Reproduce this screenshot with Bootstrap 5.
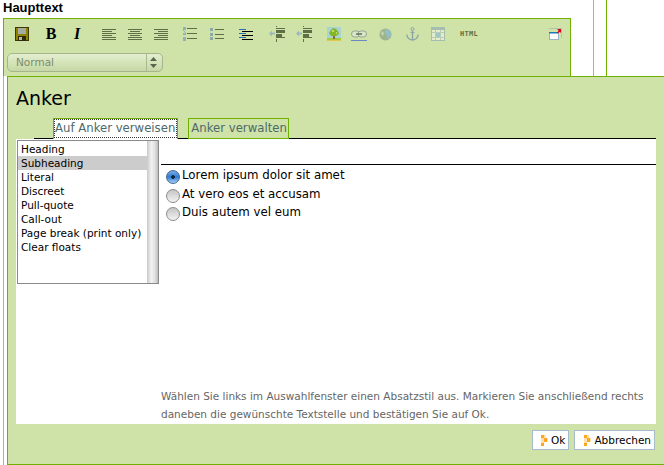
<!DOCTYPE html>
<html lang="de">
<head>
  <meta charset="UTF-8" />
  <meta name="viewport" content="width=device-width, initial-scale=1" />
  <title>Anker</title>
  <link href="https://cdn.jsdelivr.net/npm/bootstrap@5.3.2/dist/css/bootstrap.min.css" rel="stylesheet" />
  <style>
    body {
      background-color: #fff;
      color: #000;
      font-family: "DejaVu Sans", sans-serif;
      font-size: 10.5px;
      overflow: hidden;
    }
    svg { display: block; flex: none; }
    .page-top { height: 76px; }
    .editor-col { width: 571px; padding-left: 3px; }
    .field-label {
      font-family: "Liberation Sans", sans-serif;
      font-weight: 700;
      font-size: 13px;
      line-height: 16px;
      height: 18px;
    }
    .edit-bar {
      height: 58px;
      background: #cfe2a8;
      border: 1px solid #6fb000;
      border-bottom: 0;
      padding: 7px 3px 0 3px;
    }
    .bar-btn { height: 16px; }
    .sp10 { margin-left: 10px; }
    .sp11 { margin-left: 11px; }
    .sp12 { margin-left: 12px; }
    .sp13 { margin-left: 13px; }
    .sp14 { margin-left: 14px; }
    .sp15 { margin-left: 15px; }
    .sp16 { margin-left: 16px; }
    .sp19 { margin-left: 19px; }
    .end-icon { margin-right: 5px; }
    .bold-b, .ital-i {
      font-family: "Liberation Serif", serif;
      font-weight: 700;
      font-size: 16px;
      line-height: 16px;
      width: 12px;
      text-align: center;
    }
    .ital-i { font-style: italic; }
    .html-tag {
      font-family: "DejaVu Sans Mono", monospace;
      font-weight: 700;
      font-size: 7px;
      line-height: 16px;
      color: #5f6f45;
      width: 19px;
      letter-spacing: .3px;
    }
    .style-pick {
      width: 156px;
      height: 19px;
      margin: 11px 0 0 0;
      padding: 0 0 0 8px;
      font-family: "DejaVu Sans", sans-serif;
      font-size: 10.5px;
      line-height: 17px;
      color: #7c8b6c;
      border: 1px solid #a5b68c;
      border-radius: 5px;
      background-color: #d6e5b8;
      background-image:
        url("data:image/svg+xml,%3Csvg xmlns='http://www.w3.org/2000/svg' width='7' height='11'%3E%3Cpath d='M3.5 0 7 4H0zM0 7h7l-3.500 4z' fill='%23596650'/%3E%3C/svg%3E"),
        linear-gradient(#a9ba90, #a9ba90),
        linear-gradient(#e4eed0, #d3e3b6 55%, #c6d8a6);
      background-repeat: no-repeat;
      background-position: 142px 3px, 138px 0, 0 0;
      background-size: 7px 11px, 1px 100%, 100% 100%;
    }
    .style-pick:disabled { color: #7c8b6c; background-color: #d6e5b8; }
    .rule-gray { margin-left: 22px; width: 14px; border-left: 1px solid #9fb2bd; border-right: 1px solid #6fb000; }
    .dlg-outer { padding-left: 3px; height: 389px; }
    .dlg-rail { border-left: 1px solid #9fb2bd; padding-left: 3px; height: 100%; }
    .dlg-box {
      background: #cfe2a8;
      border: 1px solid #6fb000;
      border-right: 0;
      height: 389px;
      padding: 0 8px;
    }
    .dlg-title { font-size: 19px; font-weight: 400; line-height: 24px; margin: 9px 0 8px 0; }
    .tab-strip { margin-left: 18px; padding-left: 19px; border-bottom: 1px solid #000; gap: 10px; height: 21px; }
    .tab-strip .nav-link {
      font-size: 11.7px;
      line-height: 18px;
      height: 21px;
      padding: 0 1px 0 2px;
      color: #4c6a6a;
      border: 1px solid #6fb000;
      border-radius: 0;
      background: #cfe2a8;
    }
    .tab-strip .nav-link.active {
      padding: 0 2px 0 1px;
      background: #fff;
      border-bottom: 0;
      color: #4c6a6a;
      outline: 1px dotted #333;
      outline-offset: -2px;
    }
    .work-pane { background: #fff; width: 640px; height: 285px; }
    .style-box {
      flex: none;
      width: 142px;
      height: 144px;
      margin: 1px 0 0 1px;
      border: 1px solid #8a8a8a;
    }
    .style-box .list-group { width: 129px; margin-top: 1px; }
    .style-box .list-group-item {
      margin: 0;
      padding: 0 0 0 3px;
      border: 0;
      line-height: 14px;
      font-size: 10.5px;
      color: #000;
      background: transparent;
      border-radius: 0;
      white-space: nowrap;
    }
    .style-box .list-group-item.active { background: #ccc; color: #000; margin: 0; }
    .fake-scroll { width: 11px; background: linear-gradient(90deg, #c9c9c9, #f2f2f2 40%, #e2e2e2 70%, #bdbdbd); }
    .text-pane { margin-left: 2px; padding-bottom: 1px; }
    .pane-rule { height: 26px; border-bottom: 1px solid #000; flex: none; }
    .anchor-picks { padding: 2px 0 0 5px; }
    .anchor-picks .form-check {
      min-height: 0;
      height: 18.5px;
      padding-left: 0;
      margin: 0;
      display: flex;
      align-items: center;
      font-size: 11.8px;
    }
    .anchor-picks .form-check-input {
      float: none;
      width: 14px;
      height: 14px;
      margin: 2px 2px 0 0;
      border: 1px solid #8c8c8c;
      background: linear-gradient(#c4c4c4, #f4f4f4);
    }
    .anchor-picks .form-check-input:checked {
      border-color: #47698f;
      background: radial-gradient(circle at 50% 50%, #10233a 0 1.5px, transparent 2.2px), linear-gradient(#76aee8, #2f7ad2 50%, #a4d0f7);
    }
    .anchor-picks .form-check-label { color: #000; }
    .help-note { color: #666; font-size: 10.5px; line-height: 18px; padding-right: 4px; }
    .dlg-foot { gap: 5px; padding: 6px 1px 0 0; }
    .dlg-btn {
      display: flex;
      align-items: center;
      height: 20px;
      padding: 0 3px 0 8px;
      font-size: 10.5px;
      line-height: 18px;
      color: #000;
      background: #fff;
      border: 1px solid #a5bccb;
      border-radius: 0;
    }
    .dlg-btn.wide-btn { padding-left: 9px; }
    .dlg-btn svg { margin-right: 3px; }
  </style>
</head>
<body>
  <svg width="0" height="0" class="position-absolute">
    <symbol id="al" viewBox="0 0 14 11"><path d="M0 .5h14M0 2.500h10M0 4.500h14M0 6.500h10M0 8.500h14M0 10.500h14" stroke="#5f6f45"/></symbol>
    <symbol id="ac" viewBox="0 0 14 11"><path d="M0 .5h14M2 2.500h10M0 4.500h14M2 6.500h10M0 8.500h14M0 10.500h14" stroke="#5f6f45"/></symbol>
    <symbol id="ar" viewBox="0 0 14 11"><path d="M0 .5h14M4 2.500h10M0 4.500h14M4 6.500h10M0 8.500h14M0 10.500h14" stroke="#5f6f45"/></symbol>
    <symbol id="ind" viewBox="0 0 16 16"><path d="M7.500 0v1M7.500 13v3M7 2.500h9M7 11.500h9" stroke="#5f6f45"/><path d="M7 4h9v3H7zM7 8h6v3H7z" fill="#5f6f45"/><path d="M0 7.500l3-3v2h3v2H3v2z" fill="#9db8bd"/></symbol>
    <symbol id="arrow" viewBox="0 0 7 11"><path d="M0 0h3v3H0zM3 3h3v4H3zM0 8h3v3H0z" fill="#ffa51f"/><path d="M3 0h2v3H3zM0 3h3v5H0zM6 3h1v4H6z" fill="#ffe0a8"/></symbol>
  </svg>

  <div class="page-top d-flex">
    <div class="editor-col">
      <div class="field-label">Haupttext</div>
      <div class="edit-bar">
        <div class="bar-btn d-flex align-items-center">
          <svg class="ms-2" width="14" height="14" viewBox="0 0 14 14"><path d="M0 0h14v14H0z" fill="#3f3a00"/><path d="M1 1h12v12H1z" fill="#8c8100"/><path d="M3 1h8v6H3z" fill="#a6aca0"/><path d="M3 9h8v5H3z" fill="#2e2c10"/><path d="M4 10h3v3H4z" fill="#b8b8a0"/></svg>
          <span class="bold-b sp16">B</span>
          <span class="ital-i sp14">I</span>
          <svg class="sp19" width="14" height="11"><use href="#al"/></svg>
          <svg class="sp12" width="14" height="11"><use href="#ac"/></svg>
          <svg class="sp12" width="14" height="11"><use href="#ar"/></svg>
          <svg class="sp14" width="15" height="14" viewBox="0 0 15 14"><path d="M5 1.500h10M5 6.500h10M5 11.500h10" stroke="#5f6f45"/><path d="M1 0h3v3H2v2h2v3H1V6h2V4H1zM1 10h3v4H1z" fill="#8fb3b8"/></svg>
          <svg class="sp13" width="14" height="12" viewBox="0 0 14 12"><path d="M5 1.500h9M5 6.500h9M5 10.500h9" stroke="#5f6f45"/><path d="M0 0h3v3H0zM0 5h3v3H0zM0 9h3v3H0z" fill="#8fa8a8"/></svg>
          <svg class="sp15" width="14" height="11" viewBox="0 0 14 11"><path d="M0 .5h7M0 4.500h7M0 8.500h7" stroke="#2b6fb3"/><path d="M3 2.500h11M3 6.500h11M3 10.500h11" stroke="#000"/></svg>
          <svg class="sp16" width="16" height="16"><use href="#ind"/></svg>
          <svg class="sp11" width="16" height="16"><use href="#ind"/></svg>
          <svg class="sp15" width="14" height="14" viewBox="0 0 14 14"><path d="M0 0h14v11H0z" fill="#a9d4d0"/><path d="M0 11h14v3H0z" fill="#a9cc3e"/><path d="M6 7h2v5H6z" fill="#8a6a3c"/><path d="M2 6l2-3 2-2 3 1 2 2 1 3-3 2H4z" fill="#84b52c"/><path d="M5 3h2v2H5zM9 5h1v2H9z" fill="#c4dc60"/><path d="M0 13.500h14" stroke="#e0c84a"/></svg>
          <svg class="sp10" width="16" height="13" viewBox="0 0 16 13"><rect x=".5" y="3" width="8.500" height="6" rx="3" fill="#dbe6c6" stroke="#93a596"/><rect x="7" y="3" width="8.500" height="6" rx="3" fill="#dbe6c6" stroke="#93a596"/><path d="M5 6h6" stroke="#5f6f55" stroke-width="1.500"/><path d="M0 12.500h16" stroke="#6d86c4"/></svg>
          <svg class="sp12" width="13" height="13" viewBox="0 0 13 13"><circle cx="6.500" cy="6.500" r="6" fill="#9db58c"/><path d="M6 1l5 2 1 4-3 4-1-4-2-2z" fill="#8fc0cc"/><path d="M3 3l2 2-1 3-2-2z" fill="#c4d6a8"/></svg>
          <svg class="sp14" width="13" height="14" viewBox="0 0 13 14"><circle cx="6.500" cy="2" r="1.500" fill="none" stroke="#8ba6a8"/><path d="M6.500 3.500V13M.8 7.500c.4 3.500 3 5.200 5.700 5.500 2.700-.3 5.300-2 5.700-5.500" fill="none" stroke="#8ba6a8" stroke-width="1.400"/><path d="M4.500 5.500h4" stroke="#8ba6a8"/></svg>
          <svg class="sp12" width="14" height="14" viewBox="0 0 14 14"><path d="M0 0h14v14H0z" fill="#a6bdb1"/><path d="M1 3h12v10H1z" fill="#e2ecc6"/><path d="M5 6h4v4H5z" fill="#9cc8cc"/><path d="M1 5.500h12M1 10.500h12M4.500 3v10M9.500 3v10" stroke="#b9cdb4" fill="none"/></svg>
          <span class="html-tag sp15">HTML</span>
          <svg class="ms-auto end-icon" width="13" height="12" viewBox="0 0 13 12"><path d="M.5 .5h12v10" fill="none" stroke="#8fa4b8" stroke-dasharray="1 1"/><path d="M0 4h10v8H0z" fill="#9fb2c4"/><path d="M1 5h8v6H1z" fill="#fff"/><path d="M0 4h9v1.500H0z" fill="#1f78b8"/><path d="M8 1h4v4l-1.300-1.300-1.700 1.700-1-1 1.700-1.700z" fill="#e0001a"/></svg>
        </div>
        <select class="form-select style-pick" aria-label="Absatzstil" disabled>
          <option>Normal</option>
        </select>
      </div>
    </div>
    <div class="rule-gray"></div>
  </div>

  <div class="dlg-outer">
    <div class="dlg-rail">
      <div class="dlg-box">
        <h1 class="dlg-title">Anker</h1>
        <ul class="nav tab-strip">
          <li class="nav-item"><a class="nav-link active" href="#">Auf Anker verweisen</a></li>
          <li class="nav-item"><a class="nav-link" href="#">Anker verwalten</a></li>
        </ul>
        <div class="work-pane d-flex">
          <div class="style-box d-flex justify-content-between">
            <ul class="list-group">
              <li class="list-group-item">Heading</li>
              <li class="list-group-item active">Subheading</li>
              <li class="list-group-item">Literal</li>
              <li class="list-group-item">Discreet</li>
              <li class="list-group-item">Pull-quote</li>
              <li class="list-group-item">Call-out</li>
              <li class="list-group-item">Page break (print only)</li>
              <li class="list-group-item">Clear floats</li>
            </ul>
            <div class="fake-scroll"></div>
          </div>
          <div class="text-pane flex-grow-1 d-flex flex-column">
            <div class="pane-rule"></div>
            <div class="anchor-picks">
              <div class="form-check"><input class="form-check-input" type="radio" name="anker" id="a1" checked /><label class="form-check-label" for="a1">Lorem ipsum dolor sit amet</label></div>
              <div class="form-check"><input class="form-check-input" type="radio" name="anker" id="a2" /><label class="form-check-label" for="a2">At vero eos et accusam</label></div>
              <div class="form-check"><input class="form-check-input" type="radio" name="anker" id="a3" /><label class="form-check-label" for="a3">Duis autem vel eum</label></div>
            </div>
            <p class="help-note mt-auto mb-0">Wählen Sie links im Auswahlfenster einen Absatzstil aus. Markieren Sie anschließend rechts daneben die gewünschte Textstelle und bestätigen Sie auf Ok.</p>
          </div>
        </div>
        <div class="dlg-foot d-flex justify-content-end">
          <button type="button" class="dlg-btn"><svg width="7" height="11"><use href="#arrow"/></svg>Ok</button>
          <button type="button" class="dlg-btn wide-btn"><svg width="7" height="11"><use href="#arrow"/></svg>Abbrechen</button>
        </div>
      </div>
    </div>
  </div>

  <script src="https://cdn.jsdelivr.net/npm/bootstrap@5.3.2/dist/js/bootstrap.bundle.min.js"></script>
</body>
</html>
